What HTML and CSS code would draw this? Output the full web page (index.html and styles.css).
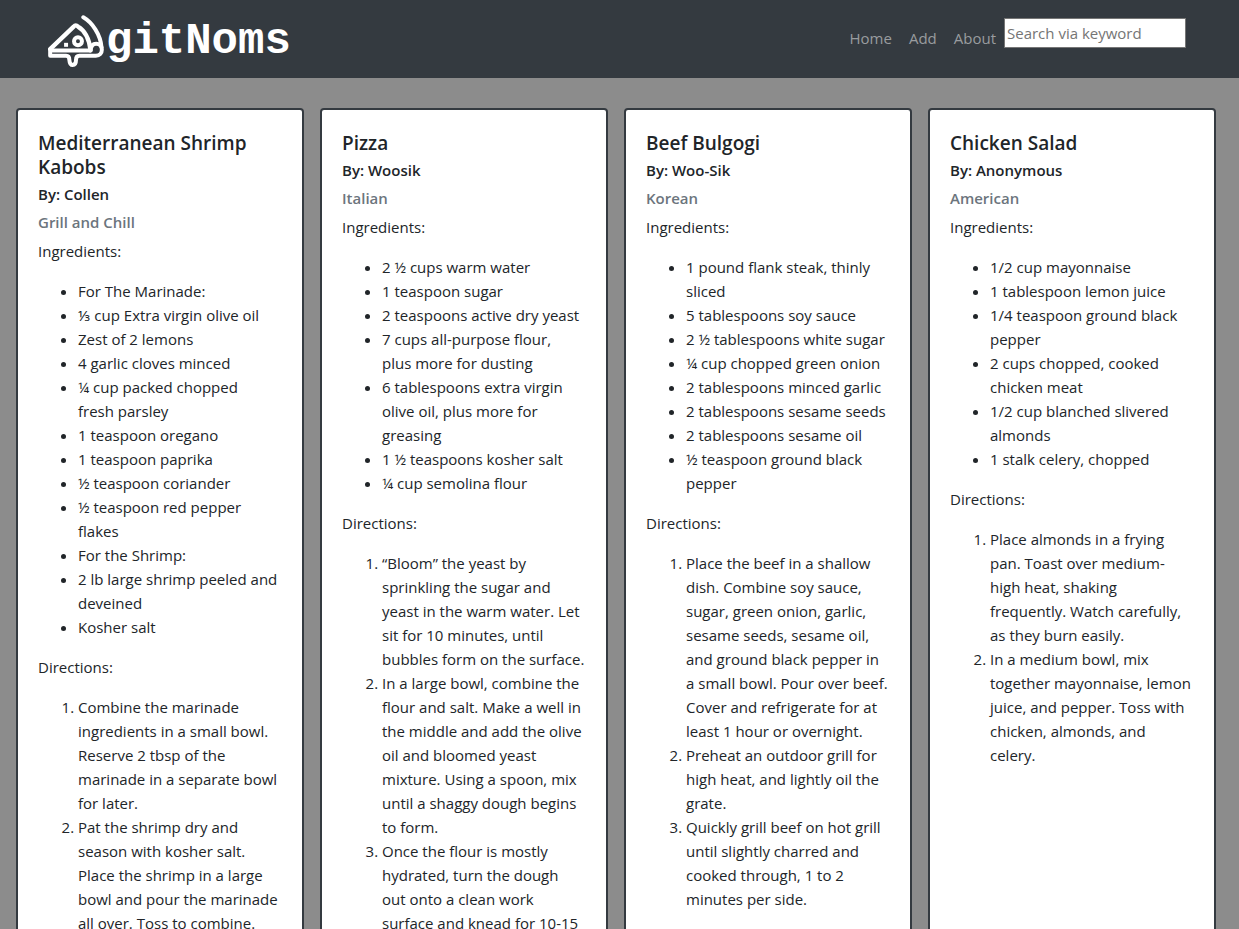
FILE: index.html
```html
<!DOCTYPE html>
<html lang="en">
<head>
<meta charset="utf-8">
<title>gitNoms</title>
<link rel="stylesheet" href="styles.css">
</head>
<body>
<header class="navbar">
  <a class="brand" href="#">
    <svg class="brand-icon" viewBox="24 22 168 160" aria-hidden="true">
      <g fill="none" stroke="#fff" stroke-width="12" stroke-linecap="round" stroke-linejoin="round">
        <path d="M130 29C158 45 182 82 185 119"/>
        <path d="M30 125L101 57Q107 50 114 57C133 68 148 94 152 129" stroke-width="13"/>
        <path d="M30 125V145H78Q88 145 88 158Q89 173 98 173Q108 173 108 158Q108 145 118 145H168C180 145 186 137 186 127C186 116 178 109 169 109C160 109 153 116 152 129H30" stroke-linecap="butt"/>
        <circle cx="114" cy="101" r="12" stroke-width="12"/>
      </g>
      <path d="M72 106h12v12h-12z" fill="#fff"/>
    </svg>
    <span class="brand-name">gitNoms</span>
  </a>
  <nav class="menu" aria-label="Main">
    <a class="menu-link" href="#">Home</a>
    <a class="menu-link" href="#">Add</a>
    <a class="menu-link" href="#">About</a>
    <input class="search" type="text" placeholder="Search via keyword" aria-label="Search via keyword">
  </nav>
</header>
<main class="recipes">
  <article class="card">
    <h2 class="title">Mediterranean Shrimp Kabobs</h2>
    <h3 class="author">By: Collen</h3>
    <h3 class="author cuisine">Grill and Chill</h3>
    <p class="label">Ingredients:</p>
    <ul class="list">
      <li>For The Marinade:</li>
      <li>⅓ cup Extra virgin olive oil</li>
      <li>Zest of 2 lemons</li>
      <li>4 garlic cloves minced</li>
      <li>¼ cup packed chopped fresh&nbsp;parsley</li>
      <li>1 teaspoon oregano</li>
      <li>1 teaspoon paprika</li>
      <li>½ teaspoon coriander</li>
      <li>½ teaspoon red pepper flakes</li>
      <li>For the Shrimp:</li>
      <li>2 lb large shrimp peeled and deveined</li>
      <li>Kosher salt</li>
    </ul>
    <p class="label">Directions:</p>
    <ol class="list">
      <li>Combine the marinade ingredients in a small bowl. Reserve 2 tbsp of the marinade in a separate bowl for later.</li>
      <li>Pat the shrimp dry and season with kosher salt. Place the shrimp in a large bowl and pour the marinade all over. Toss to combine.</li>
    </ol>
  </article>
  <article class="card">
    <h2 class="title">Pizza</h2>
    <h3 class="author">By: Woosik</h3>
    <h3 class="author cuisine">Italian</h3>
    <p class="label">Ingredients:</p>
    <ul class="list">
      <li>2 ½ cups warm water</li>
      <li>1 teaspoon sugar</li>
      <li>2 teaspoons active dry yeast</li>
      <li>7 cups all-purpose flour, plus&nbsp;more for dusting</li>
      <li>6 tablespoons extra virgin olive oil, plus more for greasing</li>
      <li>1 ½ teaspoons kosher salt</li>
      <li>¼ cup semolina flour</li>
    </ul>
    <p class="label">Directions:</p>
    <ol class="list">
      <li>“Bloom” the yeast by sprinkling the sugar and yeast in the warm water. Let sit for 10 minutes, until bubbles form on the surface.</li>
      <li>In a large bowl, combine the flour and salt. Make a well in the middle and add the olive oil and bloomed yeast mixture. Using a spoon, mix until a shaggy dough begins to form.</li>
      <li>Once the flour is mostly hydrated, turn the dough out&nbsp;onto a clean work surface&nbsp;and knead for 10-15</li>
    </ol>
  </article>
  <article class="card">
    <h2 class="title">Beef Bulgogi</h2>
    <h3 class="author">By: Woo-Sik</h3>
    <h3 class="author cuisine">Korean</h3>
    <p class="label">Ingredients:</p>
    <ul class="list">
      <li>1 pound flank steak, thinly sliced</li>
      <li>5 tablespoons soy sauce</li>
      <li>2 ½ tablespoons white sugar</li>
      <li>¼ cup chopped green onion</li>
      <li>2 tablespoons minced garlic</li>
      <li>2 tablespoons sesame seeds</li>
      <li>2 tablespoons sesame oil</li>
      <li>½ teaspoon ground black pepper</li>
    </ul>
    <p class="label">Directions:</p>
    <ol class="list">
      <li>Place the beef in a shallow dish. Combine soy sauce, sugar, green onion, garlic, sesame seeds, sesame oil, and ground black pepper in a small bowl. Pour over beef. Cover and refrigerate for at least 1 hour or overnight.</li>
      <li>Preheat an outdoor grill for high heat, and lightly oil the grate.</li>
      <li>Quickly grill beef on hot grill until slightly charred and cooked through, 1 to 2 minutes per side.</li>
    </ol>
  </article>
  <article class="card">
    <h2 class="title">Chicken Salad</h2>
    <h3 class="author">By: Anonymous</h3>
    <h3 class="author cuisine">American</h3>
    <p class="label">Ingredients:</p>
    <ul class="list">
      <li>1/2 cup mayonnaise</li>
      <li>1 tablespoon lemon juice</li>
      <li>1/4 teaspoon ground black pepper</li>
      <li>2 cups chopped, cooked chicken meat</li>
      <li>1/2 cup blanched slivered almonds</li>
      <li>1 stalk celery, chopped</li>
    </ul>
    <p class="label">Directions:</p>
    <ol class="list">
      <li>Place almonds in a frying pan. Toast over medium-high heat, shaking frequently. Watch carefully, as they burn easily.</li>
      <li>In a medium bowl, mix together mayonnaise, lemon juice, and pepper. Toss with chicken, almonds, and celery.</li>
    </ol>
  </article>
</main>
</body>
</html>
```
FILE: styles.css
```css
* { box-sizing: border-box; }

body {
  margin: 0;
  background: #8c8c8c;
  color: #212529;
  font-family: "Open Sans", "Noto Sans", sans-serif;
  font-size: 15px;
  line-height: 24px;
}

.navbar {
  display: flex;
  justify-content: space-between;
  align-items: center;
  min-height: 78px;
  padding: 0 53px 0 48px;
  background: #343a40;
}

.brand {
  display: flex;
  align-items: center;
  gap: 2px;
  padding-top: 4px;
  color: #fff;
  text-decoration: none;
}

.brand-icon {
  width: 56px;
  height: 53px;
}

.brand-name {
  font-family: "Liberation Mono", monospace;
  font-size: 44px;
  font-weight: 700;
  line-height: 52px;
}

.menu {
  display: flex;
  align-items: center;
}

.menu-link {
  padding: 0 8px 2px;
  color: #999c9f;
  text-decoration: none;
}

.menu-link + .menu-link { padding-left: 9px; }

.search {
  width: 182px;
  height: 30px;
  margin-bottom: 12px;
  padding: 1px 2px;
  border: 1px solid #767676;
  background: #fff;
  color: #212529;
  font: inherit;
}

.search::placeholder { color: #757575; }

.recipes {
  display: grid;
  grid-template-columns: repeat(4, minmax(0, 1fr));
  gap: 16px;
  padding: 30px 23px 16px 16px;
}

.card {
  padding: 21px 20px 20px;
  border: 2px solid #343a40;
  border-radius: 4px;
  background: #fff;
}

.title {
  margin: 0 0 5px;
  font-size: 19px;
  font-weight: 600;
  line-height: 24px;
}

.author {
  margin: 0 0 8px;
  font-size: 15px;
  font-weight: 600;
  line-height: 20px;
}

.cuisine {
  margin-bottom: 7px;
  color: #6c757d;
}

.label { margin: 0 0 16px; }

.list {
  margin: 0 0 16px;
  padding-left: 40px;
}
```
